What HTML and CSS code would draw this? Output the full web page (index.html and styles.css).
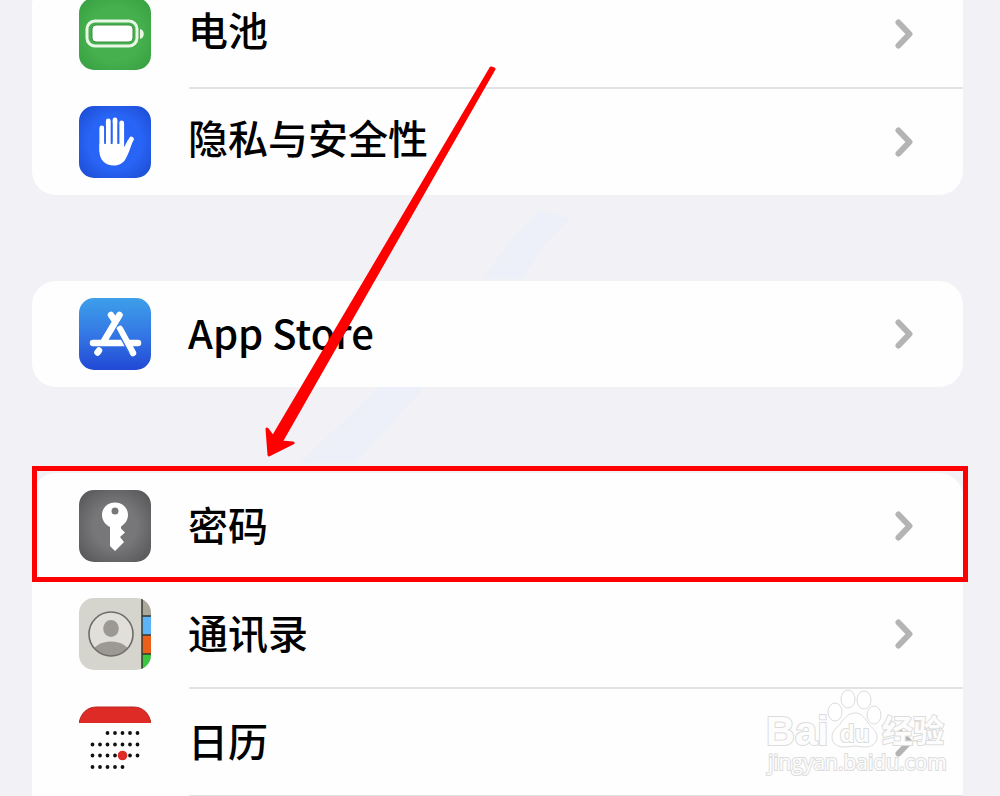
FILE: index.html
```html
<!DOCTYPE html>
<html lang="zh-CN">
  <head>
    <meta charset="UTF-8" />
    <meta name="viewport" content="width=device-width, initial-scale=1" />
    <title>设置</title>
    <link rel="stylesheet" href="styles.css">
  </head>
  <body>
    <main class="settings">
      <svg class="shine" viewBox="0 0 300 260" aria-hidden="true">
        <path d="M182 76 215 32 240 8l30 8-26 26-21 34zM0 260l80-77h45l-40 45-30 32z" />
      </svg>

      <!-- 电池 / 隐私 -->
      <section class="group group-continued">
        <a class="row" href="#">
          <svg class="icon" viewBox="0 0 72 72" aria-hidden="true">
            <defs>
              <radialGradient id="green" r="0.75">
                <stop offset="0.5" stop-color="#46b04e" />
                <stop offset="1" stop-color="#329a3c" />
              </radialGradient>
            </defs>
            <rect width="72" height="72" rx="15" fill="url(#green)" />
            <rect x="8" y="23" width="50" height="25" rx="8" fill="none" stroke="#e9f7e6" stroke-width="3" />
            <rect x="13" y="27" width="41" height="17" rx="4" fill="#fff" stroke="#3c8f42" />
            <path d="M61 31c5 1 5 9 0 10z" fill="#e9f7e6" />
          </svg>
          <span class="label">电池</span>
          <svg class="chevron" viewBox="0 0 20 32" aria-hidden="true"><path d="M4.500 4.500 15.500 16 4.500 27.500" /></svg>
        </a>
        <hr class="divider" />
        <a class="row" href="#">
          <svg class="icon" viewBox="0 0 72 72" aria-hidden="true">
            <defs>
              <radialGradient id="blue" r="0.75">
                <stop offset="0.5" stop-color="#2864f5" />
                <stop offset="1" stop-color="#1945c8" />
              </radialGradient>
            </defs>
            <rect width="72" height="72" rx="15" fill="url(#blue)" />
            <path d="M22.800 22v23M29.300 15v26M36 14v26M42.700 17v26M52.500 33 46 45" fill="none" stroke="#fff" stroke-width="4.800" stroke-linecap="round" />
            <path d="M20.500 38h24.500v4l4-8 4 3c-2 6-4 12-7 17-3 4-7 5.500-11 5.500-9 0-14.500-6-14.500-14z" fill="#fff" />
            <path d="M26.100 20v16M32.700 17v19M39.400 18v19" stroke="#2864f5" stroke-width="1.500" />
          </svg>
          <span class="label">隐私与安全性</span>
          <svg class="chevron" viewBox="0 0 20 32" aria-hidden="true"><path d="M4.500 4.500 15.500 16 4.500 27.500" /></svg>
        </a>
      </section>

      <!-- App Store -->
      <section class="group">
        <a class="row" href="#">
          <svg class="icon" viewBox="0 0 72 72" aria-hidden="true">
            <defs>
              <linearGradient id="store" x2="0" y2="1">
                <stop offset="0" stop-color="#3d9fe9" />
                <stop offset="0.5" stop-color="#3478e5" />
                <stop offset="1" stop-color="#2148d5" />
              </linearGradient>
            </defs>
            <rect width="72" height="72" rx="15" fill="url(#store)" />
            <g fill="none" stroke="#fff" stroke-width="6.500" stroke-linecap="round">
              <path d="M40.500 17 25 43M32 17l4 6M14 45h45" />
              <path d="M41 31 54 55" />
              <path d="M20 52.500 18.500 54.500" />
            </g>
            <path d="M37 31 50 55" stroke="#3274e4" stroke-width="1.500" />
          </svg>
          <span class="label">App Store</span>
          <svg class="chevron" viewBox="0 0 20 32" aria-hidden="true"><path d="M4.500 4.500 15.500 16 4.500 27.500" /></svg>
        </a>
      </section>

      <!-- 密码 / 通讯录 / 日历 -->
      <section class="group group-open">
        <a class="row row-marked" href="#">
          <svg class="icon" viewBox="0 0 72 72" aria-hidden="true">
            <defs>
              <radialGradient id="gray" r="0.75">
                <stop offset="0.4" stop-color="#77777a" />
                <stop offset="1" stop-color="#4e4e51" />
              </radialGradient>
            </defs>
            <rect width="72" height="72" rx="15" fill="url(#gray)" />
            <path fill="#fff" fill-rule="evenodd" d="M36 12.500c7.500 0 13 5.500 13 12.500 0 5-3 9-7 11.500v2l4 4-5 4.500 4 5-9 9-5-5V37c-5-2.500-8-7-8-12 0-7 5.500-12.500 13-12.500zM36 17.500a3.500 3.500 0 1 0 0 7 3.500 3.500 0 0 0 0-7z" />
          </svg>
          <span class="label">密码</span>
          <svg class="chevron" viewBox="0 0 20 32" aria-hidden="true"><path d="M4.500 4.500 15.500 16 4.500 27.500" /></svg>
        </a>
        <hr class="divider" />
        <a class="row" href="#">
          <svg class="icon" viewBox="0 0 72 72" aria-hidden="true">
            <defs>
              <clipPath id="tile"><rect width="72" height="72" rx="15" /></clipPath>
              <clipPath id="avatar"><circle cx="32" cy="36" r="22" /></clipPath>
            </defs>
            <g clip-path="url(#tile)">
              <rect width="72" height="72" fill="#d5d4cd" />
              <rect x="63" width="9" height="18" fill="#aaa79b" />
              <rect x="63" y="18" width="9" height="19" fill="#5cb3f5" />
              <rect x="63" y="37" width="9" height="19" fill="#ea601b" />
              <rect x="63" y="56" width="9" height="16" fill="#3cc63f" />
              <path d="M63 0v72M63 18h9M63 37h9M63 56h9" stroke="#34372f" stroke-width="1.500" />
            </g>
            <circle cx="32" cy="36" r="22" fill="#e0dfd9" />
            <g clip-path="url(#avatar)" fill="#9c9894">
              <ellipse cx="32" cy="30.500" rx="7.800" ry="8.500" />
              <ellipse cx="32" cy="56" rx="19" ry="12.500" />
            </g>
            <circle cx="32" cy="36" r="22" fill="none" stroke="#6f6c67" stroke-width="1.600" />
          </svg>
          <span class="label">通讯录</span>
          <svg class="chevron" viewBox="0 0 20 32" aria-hidden="true"><path d="M4.500 4.500 15.500 16 4.500 27.500" /></svg>
        </a>
        <hr class="divider" />
        <a class="row" href="#">
          <svg class="icon" viewBox="0 0 72 72" aria-hidden="true">
            <path d="M0 17C2 7 8 1 18 1h36c10 0 16 6 18 16z" fill="#df2b26" />
            <path d="M0 17C2 7 8 1 18 1h36c10 0 16 6 18 16" fill="none" stroke="#b72520" />
            <path d="M28.500 27h31M13.500 38.500h46M13.500 49.500h46M13.500 61h31" fill="none" stroke="#111" stroke-width="3.800" stroke-linecap="round" stroke-dasharray="0 7.500" />
            <circle cx="43.500" cy="49.500" r="4.800" fill="#df2b26" />
          </svg>
          <span class="label">日历</span>
          <svg class="chevron" viewBox="0 0 20 32" aria-hidden="true"><path d="M4.500 4.500 15.500 16 4.500 27.500" /></svg>
        </a>
        <hr class="divider" />
      </section>

      <svg class="arrow" viewBox="0 0 240 400" aria-hidden="true">
        <path d="M231 8 13 377 7 369 9 395 33 383 21 382 234 9z" />
      </svg>

      <svg class="watermark" viewBox="0 0 190 95" aria-hidden="true">
        <ellipse cx="75" cy="27" rx="7" ry="9" />
        <ellipse cx="88" cy="14" rx="7" ry="9" />
        <ellipse cx="104" cy="15" rx="7" ry="9" />
        <ellipse cx="114" cy="30" rx="7" ry="9" />
        <path d="M95 28c6 0 9 4 13 10 4 5 9 8 9 14 0 7-6 10-12 10-4 0-6-1-10-1s-6 1-11 1c-6 0-12-3-12-10 0-6 5-9 9-14 4-6 8-10 14-10z" />
        <text class="brand" x="6" y="60">Bai</text>
        <text class="brand-du" x="80" y="57">du</text>
        <text class="brand-cn" x="122" y="57">经验</text>
        <text class="brand-url" x="8" y="85">jingyan.baidu.com</text>
      </svg>
    </main>
  </body>
</html>
```

FILE: styles.css
```css
body {
  margin: 0;
  background: #f1f1f6;
  color: #000;
  font-family: "Noto Sans CJK SC", sans-serif;
}

/* 列表已向上滚动一段 */
.settings {
  position: relative;
  margin-top: -19px;
  padding: 0 37px 0 32px;
}

.group {
  position: relative;
  margin-bottom: 86px;
  border-radius: 24px;
  background: #fefefe;
}

.group-continued .label {
  padding-bottom: 10px;
}

.group-open {
  margin-bottom: 0;
  border-radius: 24px 24px 0 0;
}

.row {
  position: relative;
  display: flex;
  align-items: center;
  height: 106px;
  padding-left: 47px;
  color: inherit;
  text-decoration: none;
}

.row-marked::after {
  content: "";
  position: absolute;
  top: -7px;
  right: -5px;
  bottom: -3px;
  left: 0;
  z-index: 1;
  border: 5px solid #fe0000;
}

.divider {
  height: 2px;
  margin: 0 0 0 157px;
  border: none;
  background: #e1e2e4;
}

.icon {
  width: 72px;
  height: 72px;
}

.label {
  flex: 1;
  margin-left: 37px;
  padding-bottom: 4px;
  font-size: 40px;
  font-weight: 500;
  line-height: 60px;
}

.group-continued .label {
  padding-bottom: 10px;
}

.chevron {
  width: 20px;
  height: 32px;
  margin-right: 49px;
  fill: none;
  stroke: #b4b4b4;
  stroke-width: 6px;
  stroke-linecap: round;
  stroke-linejoin: round;
}

.shine {
  position: absolute;
  top: 222px;
  left: 300px;
  width: 300px;
  height: 260px;
  fill: #edf0f8;
}

.arrow {
  position: absolute;
  top: 79px;
  left: 260px;
  width: 240px;
  height: 400px;
  fill: #fe0000;
  stroke: #fe0000;
  stroke-width: 3px;
  stroke-linejoin: round;
  pointer-events: none;
}

.watermark {
  position: absolute;
  right: 50px;
  bottom: 17px;
  width: 190px;
  height: 95px;
  fill: rgba(255, 255, 255, 0.8);
  stroke: #dcdcdc;
  stroke-width: 1px;
  pointer-events: none;
}

.watermark text {
  stroke-width: 2px;
  paint-order: stroke;
  fill: #fdfdfd;
}

.brand {
  font-family: "Liberation Sans", sans-serif;
  font-size: 40px;
  font-weight: 700;
}

.brand-du {
  font-family: "Liberation Sans", sans-serif;
  font-size: 24px;
  font-weight: 700;
}

.brand-cn {
  font-size: 31px;
  font-weight: 700;
}

.brand-url {
  font-family: "Open Sans", sans-serif;
  font-size: 21px;
}
```
